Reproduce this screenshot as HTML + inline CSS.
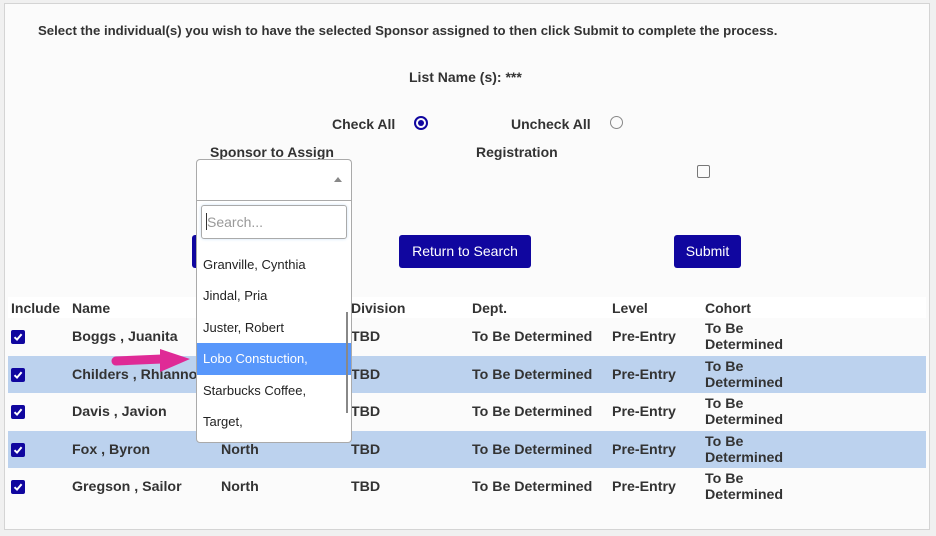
<!DOCTYPE html>
<html><head><style>
body{margin:0;width:936px;height:536px;background:#f0f0f0;font-family:"Liberation Sans",Arial,sans-serif;color:#333;overflow:hidden;position:relative}
.p{position:absolute;left:4px;top:3px;width:926px;height:527px;background:#fbfbfb;border:1px solid #d4d4d4;box-sizing:border-box}
.a{position:absolute;white-space:nowrap}
.b{font-weight:bold;font-size:14px}
.d{font-size:14.2px}
.row{position:absolute;left:8px;width:918px}
.cb{position:absolute;left:11px;width:14px;height:14px;background:#10069f;border-radius:2px}
.cb svg{position:absolute;left:2px;top:2px}
.btn{position:absolute;background:#10069f;color:#fff;font-size:14px;border-radius:3px;text-align:center;line-height:33px;height:33px}
.it{position:absolute;left:203px;font-size:13px;color:#222}
.co{font-size:14.2px;line-height:16px}
</style></head><body>
<div class="p"></div>
<div class="a" style="left:38px;top:23px;font-size:13.2px;font-weight:bold">Select the individual(s) you wish to have the selected Sponsor assigned to then click Submit to complete the process.</div>
<div class="a b" style="left:409px;top:69px">List Name (s): ***</div>
<div class="a b" style="left:332px;top:116px">Check All</div>
<div class="a" style="left:414px;top:116px;width:10px;height:10px;border:2px solid #10069f;border-radius:50%"><div style="position:absolute;left:2px;top:2px;width:6px;height:6px;border-radius:50%;background:#10069f"></div></div>
<div class="a b" style="left:511px;top:116px">Uncheck All</div>
<div class="a" style="left:610px;top:116px;width:11px;height:11px;border:1.5px solid #888;border-radius:50%"></div>
<div class="a b" style="left:210px;top:144px">Sponsor to Assign</div>
<div class="a b" style="left:476px;top:144px">Registration</div>
<div class="a" style="left:697px;top:165px;width:11px;height:11px;border:1.5px solid #777;border-radius:2px"></div>
<div class="btn" style="left:192px;top:235px;width:60px"></div>
<div class="btn" style="left:399px;top:235px;width:132px">Return to Search</div>
<div class="btn" style="left:674px;top:235px;width:67px">Submit</div>

<div class="row" style="top:297px;height:21px;background:#fff"></div>
<div class="row" style="top:356px;height:37px;background:#bcd2ee"></div>
<div class="row" style="top:431px;height:37px;background:#bcd2ee"></div>
<div class="a b" style="left:11px;top:300px">Include</div>
<div class="a b" style="left:72px;top:300px">Name</div>
<div class="a b" style="left:351px;top:300px">Division</div>
<div class="a b" style="left:472px;top:300px">Dept.</div>
<div class="a b" style="left:612px;top:300px">Level</div>
<div class="a b" style="left:705px;top:300px">Cohort</div>

<div class="cb" style="top:330px"><svg width="10" height="10" viewBox="0 0 10 10"><path d="M1.5 5.2 L4 7.6 L8.6 2.2" stroke="#fff" stroke-width="2" fill="none"/></svg></div>
<div class="a b d" style="left:72px;top:329px">Boggs , Juanita</div>
<div class="a b d" style="left:351px;top:329px">TBD</div>
<div class="a b d" style="left:472px;top:329px">To Be Determined</div>
<div class="a b d" style="left:612px;top:329px">Pre-Entry</div>
<div class="a b co" style="left:705px;top:321px">To Be<br>Determined</div>

<div class="cb" style="top:368px"><svg width="10" height="10" viewBox="0 0 10 10"><path d="M1.5 5.2 L4 7.6 L8.6 2.2" stroke="#fff" stroke-width="2" fill="none"/></svg></div>
<div class="a b d" style="left:72px;top:367px">Childers , Rhiannon</div>
<div class="a b d" style="left:351px;top:367px">TBD</div>
<div class="a b d" style="left:472px;top:367px">To Be Determined</div>
<div class="a b d" style="left:612px;top:367px">Pre-Entry</div>
<div class="a b co" style="left:705px;top:359px">To Be<br>Determined</div>

<div class="cb" style="top:405px"><svg width="10" height="10" viewBox="0 0 10 10"><path d="M1.5 5.2 L4 7.6 L8.6 2.2" stroke="#fff" stroke-width="2" fill="none"/></svg></div>
<div class="a b d" style="left:72px;top:404px">Davis , Javion</div>
<div class="a b d" style="left:351px;top:404px">TBD</div>
<div class="a b d" style="left:472px;top:404px">To Be Determined</div>
<div class="a b d" style="left:612px;top:404px">Pre-Entry</div>
<div class="a b co" style="left:705px;top:396px">To Be<br>Determined</div>

<div class="cb" style="top:443px"><svg width="10" height="10" viewBox="0 0 10 10"><path d="M1.5 5.2 L4 7.6 L8.6 2.2" stroke="#fff" stroke-width="2" fill="none"/></svg></div>
<div class="a b d" style="left:72px;top:442px">Fox , Byron</div>
<div class="a b d" style="left:221px;top:442px">North</div>
<div class="a b d" style="left:351px;top:442px">TBD</div>
<div class="a b d" style="left:472px;top:442px">To Be Determined</div>
<div class="a b d" style="left:612px;top:442px">Pre-Entry</div>
<div class="a b co" style="left:705px;top:434px">To Be<br>Determined</div>

<div class="cb" style="top:480px"><svg width="10" height="10" viewBox="0 0 10 10"><path d="M1.5 5.2 L4 7.6 L8.6 2.2" stroke="#fff" stroke-width="2" fill="none"/></svg></div>
<div class="a b d" style="left:72px;top:479px">Gregson , Sailor</div>
<div class="a b d" style="left:221px;top:479px">North</div>
<div class="a b d" style="left:351px;top:479px">TBD</div>
<div class="a b d" style="left:472px;top:479px">To Be Determined</div>
<div class="a b d" style="left:612px;top:479px">Pre-Entry</div>
<div class="a b co" style="left:705px;top:471px">To Be<br>Determined</div>

<!-- dropdown -->
<div class="a" style="left:196px;top:159px;width:156px;height:42px;background:#fff;border:1px solid #aaa;border-bottom:none;border-radius:4px 4px 0 0;box-sizing:border-box"></div>
<div class="a" style="left:334px;top:177px;width:0;height:0;border-left:4px solid transparent;border-right:4px solid transparent;border-bottom:5px solid #888"></div>
<div class="a" style="left:196px;top:200px;width:156px;height:243px;background:#fff;border:1px solid #aaa;border-radius:0 0 4px 4px;box-sizing:border-box"></div>
<div class="a" style="left:201px;top:205px;width:146px;height:34px;border:1px solid #aaa;border-radius:3px;box-sizing:border-box;box-shadow:0 0 3px #cde3f5"></div>
<div class="a" style="left:206px;top:213px;width:1px;height:17px;background:#333"></div>
<div class="a" style="left:207px;top:214px;font-size:14px;color:#999">Search...</div>
<div class="it" style="top:257px">Granville, Cynthia</div>
<div class="it" style="top:288px">Jindal, Pria</div>
<div class="it" style="top:320px">Juster, Robert</div>
<div class="a" style="left:197px;top:343px;width:154px;height:32px;background:#5897fb"></div>
<div class="it" style="top:351px;color:#fff">Lobo Constuction,</div>
<div class="it" style="top:383px">Starbucks Coffee,</div>
<div class="it" style="top:414px">Target,</div>
<div class="a" style="left:346px;top:312px;width:2px;height:101px;background:#888"></div>

<!-- pink arrow -->
<svg class="a" style="left:110px;top:348px" width="84" height="26" viewBox="0 0 84 26"><path d="M6 13 L52 11" stroke="#df2a96" stroke-width="9" stroke-linecap="round"/><path d="M50 1 L80 11 L50 24 Z" fill="#df2a96"/></svg>
</body></html>
